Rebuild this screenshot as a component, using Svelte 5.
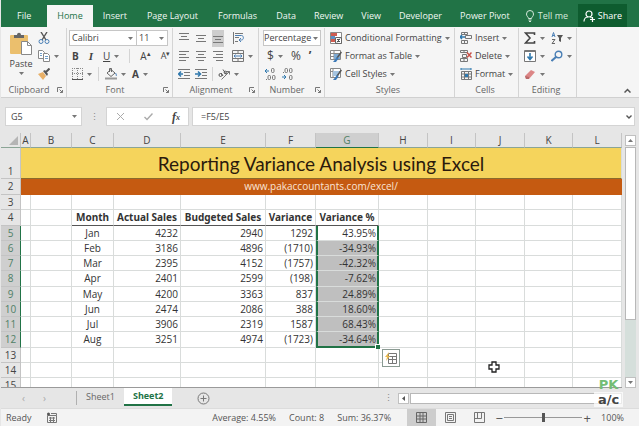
<script>
    const tabs = ["File", "Home", "Insert", "Page Layout", "Formulas", "Data", "Review", "View", "Developer", "Power Pivot"];

    // Column letters with their widths
    const columns = [
        ["A", 10], ["B", 41], ["C", 42], ["D", 67], ["E", 85], ["F", 50], ["G", 63],
        ["H", 49], ["I", 48], ["J", 49], ["K", 48], ["L", 49]
    ];

    const headings = ["Month", "Actual Sales", "Budgeted Sales", "Variance", "Variance %"];

    const sales = [
        ["Jan", "4232", "2940", "1292", "43.95%"],
        ["Feb", "3186", "4896", "(1710)", "-34.93%"],
        ["Mar", "2395", "4152", "(1757)", "-42.32%"],
        ["Apr", "2401", "2599", "(198)", "-7.62%"],
        ["May", "4200", "3363", "837", "24.89%"],
        ["Jun", "2474", "2086", "388", "18.60%"],
        ["Jul", "3906", "2319", "1587", "68.43%"],
        ["Aug", "3251", "4974", "(1723)", "-34.64%"]
    ];

    const empty = [0, 1, 2, 3, 4];

    let activeTab = $state("Home");
    let sheet = $state("Sheet2");
    let formula = $state("=F5/E5");
    let zoom = $state(50);
</script>

{#snippet caret()}
    <svg class="caret" viewBox="0 0 5 3"><path d="M0 0h5L2.500 3z" /></svg>
{/snippet}

{#snippet lines(rows)}
    <svg class="icon" viewBox="0 0 12 12">
        {#each rows as [x, y, w]}
            <path d="M{x} {y}.5h{w}" stroke="#777" />
        {/each}
    </svg>
{/snippet}

{#snippet launcher()}
    <button class="launcher" aria-label="More options">
        <svg viewBox="0 0 6 6" fill="none" stroke="#777"><path d="M.5 5V.5H5M2.500 2.500l3 3M5.500 3v2.500H3" /></svg>
    </button>
{/snippet}

<div class="excel">
    <nav class="tabs">
        {#each tabs as tab}
            <button class:active={activeTab === tab} onclick={() => (activeTab = tab)}>{tab}</button>
        {/each}
        <button class="tell">
            <svg class="icon" viewBox="0 0 12 12" fill="none" stroke="#d5e9dc"><path d="M4.500 8.500C4.500 7 2.500 6.500 2.500 4a3.500 3.500 0 017 0c0 2.500-2 3-2 4.500zM4.500 10h3M5 11.500h2" /></svg>
            Tell me
        </button>
        <button class="share">
            <svg class="icon" viewBox="0 0 12 12" fill="none" stroke="#fff" stroke-width="1.200"><circle cx="6" cy="4" r="3" /><path d="M1 11.500c0-3 2-4.500 4-4.500M7.500 7l1 1M7 9.500h5M9.500 7v5" /></svg>
            Share
        </button>
    </nav>

    <div class="ribbon">
        <section class="group clipboard">
            <div class="tools">
                <button class="paste">
                    <svg width="24" height="24" viewBox="0 0 24 24">
                        <rect x="1" y="3" width="18" height="19" rx="1" fill="#ebbf6d" />
                        <path d="M5 6V3h3c0-3 4-3 4 0h3v3z" fill="#666" />
                        <path d="M12.500 9.500h6l4 4v9h-10z" fill="#fff" stroke="#888" />
                        <path d="M18.500 9.500v4h4" fill="none" stroke="#888" />
                    </svg>
                    <span>Paste</span>
                    {@render caret()}
                </button>
                <div class="stack">
                    <button aria-label="Cut">
                        <svg class="icon" viewBox="0 0 12 12" fill="none"><path d="M3 0l5 8M9 0L4 8" stroke="#555" stroke-width="1.400" /><circle cx="3" cy="9.500" r="2" stroke="#4a7fb5" /><circle cx="9" cy="9.500" r="2" stroke="#4a7fb5" /></svg>
                    </button>
                    <button aria-label="Copy">
                        <svg class="icon" viewBox="0 0 12 12" fill="#fff" stroke="#888"><path d="M.5.5h4l2 2v6h-6z" /><path d="M5.500 3.500h4l2 2v6h-6z" /><path d="M2 3.500h2M2 5.500h2M7 6.500h3M7 8.500h3" stroke="#6f9dc8" /></svg>
                        {@render caret()}
                    </button>
                    <button aria-label="Format Painter">
                        <svg class="icon" viewBox="0 0 12 12"><path d="M0 6l5-2 3 4-3 4z" fill="#e8b068" /><path d="M5 3l4 5 1-2-3-4z" fill="#555" /><path d="M8 4l3.500-3.500" stroke="#555" stroke-width="2" /></svg>
                    </button>
                </div>
            </div>
            <footer><h2>Clipboard</h2>{@render launcher()}</footer>
        </section>

        <section class="group font">
            <div class="tools stack">
                <div class="line fields">
                    <select aria-label="Font"><option>Calibri</option></select>
                    <select class="size" aria-label="Font size"><option>11</option></select>
                </div>
                <div class="line letters">
                    <button aria-label="Bold"><b>B</b></button>
                    <button aria-label="Italic"><i>I</i></button>
                    <button aria-label="Underline"><u>U</u>{@render caret()}</button>
                    <span class="rule"></span>
                    <button aria-label="Increase font size">A<sup>▴</sup></button>
                    <button class="small" aria-label="Decrease font size">A<sup>▾</sup></button>
                </div>
                <div class="line letters colours">
                    <button aria-label="Borders">
                        <svg class="icon" viewBox="0 0 12 12" fill="none" stroke="#888"><path d="M1.500 0v11M6.500 0v11M11.500 0v11M1 .5h11M1 5.500h11" stroke-dasharray="1 1" /><path d="M1 11.500h11" stroke="#555" /></svg>
                        {@render caret()}
                    </button>
                    <span class="rule"></span>
                    <button aria-label="Fill colour">
                        <svg class="icon" viewBox="0 0 12 12" fill="none" stroke="#666"><path d="M2 5l4-3.500L10 5 6 8.500zM4.500 4V.5h2V4" /><path d="M10.500 5c1 1.500 1 3 .5 3" stroke="#4a7fb5" /><path d="M0 10.500h12" stroke="#999" stroke-width="2" /></svg>
                        {@render caret()}
                    </button>
                    <button aria-label="Font colour"><b>A</b>{@render caret()}</button>
                </div>
            </div>
            <footer><h2>Font</h2>{@render launcher()}</footer>
        </section>

        <section class="group alignment">
            <div class="tools stack">
                <div class="line">
                    <button aria-label="Top align">{@render lines([[1, 1, 10], [3, 4, 6], [1, 7, 10]])}</button>
                    <button aria-label="Middle align">{@render lines([[1, 3, 10], [3, 6, 6], [1, 9, 10]])}</button>
                    <button class="pressed" aria-label="Bottom align">{@render lines([[1, 4, 10], [3, 7, 6], [1, 10, 10]])}</button>
                    <button class="wide" aria-label="Wrap text">
                        <svg class="icon" viewBox="0 0 12 12" fill="none" stroke="#777"><path d="M1.500 0v12M3 1.500h8M3 5.500h4M3 9.500h3" /><path d="M3 3.500h6.500c2.500 0 2.500 4.500 0 4.500H7M9 6L7 8l2 2" stroke="#4a7fb5" /></svg>
                    </button>
                </div>
                <div class="line">
                    <button aria-label="Align left">{@render lines([[1, 1, 10], [1, 4, 7], [1, 7, 10], [1, 10, 7]])}</button>
                    <button aria-label="Centre">{@render lines([[1, 1, 10], [3, 4, 6], [1, 7, 10], [3, 10, 6]])}</button>
                    <button aria-label="Align right">{@render lines([[1, 1, 10], [4, 4, 7], [1, 7, 10], [4, 10, 7]])}</button>
                    <button class="wide" aria-label="Merge and centre">
                        <svg class="icon" viewBox="0 0 12 12" fill="none" stroke="#777"><path d="M.5.5h11v11H.5zM.5 3.500h11M.5 8.500h11M6 0v3M6 9v3" /><path d="M2 6h8M3.500 4.500L2 6l1.500 1.500M8.500 4.500L10 6 8.500 7.500" stroke="#4a7fb5" /></svg>
                        {@render caret()}
                    </button>
                </div>
                <div class="line">
                    <button aria-label="Decrease indent">
                        <svg class="icon" viewBox="0 0 12 12" fill="none" stroke="#777"><path d="M0 1.500h12M6 4.500h6M6 7.500h6M0 10.500h12" /><path d="M5 6H1M3 3.500L.5 6 3 8.500" stroke="#2f78ad" stroke-width="1.500" /></svg>
                    </button>
                    <button aria-label="Increase indent">
                        <svg class="icon" viewBox="0 0 12 12" fill="none" stroke="#777"><path d="M0 1.500h12M7 4.500h5M7 7.500h5M0 10.500h12" /><path d="M0 6h5M3 3.500L5.500 6 3 8.500" stroke="#2f78ad" stroke-width="1.500" /></svg>
                    </button>
                    <span class="rule"></span>
                    <button aria-label="Orientation">
                        <svg class="icon" viewBox="0 0 12 12" fill="none" stroke="#555"><path d="M3.500 11.500l8-8M8.500 3.500h3v3" stroke="#777" /><circle cx="2.500" cy="7" r="1.500" /><path d="M3 5l2 3M5 1.500l3 4.500" /><circle cx="7.500" cy="4.500" r="1.300" /></svg>
                        {@render caret()}
                    </button>
                </div>
            </div>
            <footer><h2>Alignment</h2>{@render launcher()}</footer>
        </section>

        <section class="group number">
            <div class="tools stack">
                <div class="line fields">
                    <select aria-label="Number format"><option>Percentage</option></select>
                </div>
                <div class="line symbols">
                    <button aria-label="Accounting format">${@render caret()}</button>
                    <button aria-label="Percent style">%</button>
                    <button aria-label="Comma style"><b>’</b></button>
                </div>
                <div class="line decimals">
                    <button aria-label="Increase decimal">
                        <svg class="icon" viewBox="0 0 12 12" fill="none" stroke="#777"><path d="M1 3h4M3 1L1 3l2 2" stroke="#2f78ad" /><rect x="7.500" y=".5" width="2.500" height="4" rx="1" /><rect x="4" y="7.500" width="2.500" height="4" rx="1" /><rect x="8.500" y="7.500" width="2.500" height="4" rx="1" /><path d="M2 11.500h1" /></svg>
                    </button>
                    <button aria-label="Decrease decimal">
                        <svg class="icon" viewBox="0 0 12 12" fill="none" stroke="#777"><path d="M1 9h4M3 7l2 2-2 2" stroke="#2f78ad" /><rect x="4" y=".5" width="2.500" height="4" rx="1" /><rect x="8.500" y=".5" width="2.500" height="4" rx="1" /><rect x="8.500" y="7.500" width="2.500" height="4" rx="1" /><path d="M2 4.500h1" /></svg>
                    </button>
                </div>
            </div>
            <footer><h2>Number</h2>{@render launcher()}</footer>
        </section>

        <section class="group styles">
            <div class="tools stack">
                <button>
                    <svg class="icon" viewBox="0 0 12 12"><path d="M.5.5h11v11H.5z" fill="#fff" stroke="#888" /><path d="M1 1h6v3H1zM1 7h4v3H1z" fill="#cf5b50" /><path d="M1 4h4v3H1z" fill="#5b8fc4" /><path d="M5.500 5.500h6v6h-6z" fill="#fff" stroke="#666" /><path d="M7 7.500h3M7 9.500h3M10 6.500l-3 4" stroke="#555" /></svg>
                    Conditional Formatting {@render caret()}
                </button>
                <button>
                    <svg class="icon" viewBox="0 0 12 12"><path d="M.5.5h10v9H.5zM.5 3.500h10M.5 6.500h10M4 0v9" fill="#fff" stroke="#888" /><path d="M4 4h6v5H4z" fill="#7eaad3" /><path d="M11.500 2L7 8" stroke="#555" stroke-width="1.500" /><path d="M7 7l1.500 1.500L6 12H3z" fill="#3d7ab8" /></svg>
                    Format as Table {@render caret()}
                </button>
                <button>
                    <svg class="icon" viewBox="0 0 12 12"><path d="M.5.5h10v9H.5zM.5 3.500h10M3 0v9" fill="#fff" stroke="#888" /><path d="M3 3h6v5H3z" fill="#a5c4e0" /><path d="M11.500 2L7 8" stroke="#555" stroke-width="1.500" /><path d="M7 7l1.500 1.500L6 12H3z" fill="#3d7ab8" /></svg>
                    Cell Styles {@render caret()}
                </button>
            </div>
            <footer><h2>Styles</h2></footer>
        </section>

        <section class="group cells">
            <div class="tools stack">
                <button>
                    <svg class="icon" viewBox="0 0 12 12" fill="none" stroke="#777"><path d="M1.500.5h6v2h-6zM4.500.5v2M1.500 8.500h6v3h-6zM4.500 8.500v3M5.500 3.500h6v3h-6z" /><path d="M0 5h5M2 3L0 5l2 2" stroke="#2f78ad" stroke-width="1.400" /></svg>
                    Insert {@render caret()}
                </button>
                <button>
                    <svg class="icon" viewBox="0 0 12 12" fill="none" stroke="#777"><path d="M.5.5h7v2h-7zM4 .5v2M.5 8.500h7v3h-7zM4 8.500v3M2.500 4.500h4v3h-4z" /><path d="M7 2.500l4.500 5M11.500 2.500L7 7.500" stroke="#c94f46" stroke-width="1.500" /></svg>
                    Delete {@render caret()}
                </button>
                <button>
                    <svg class="icon" viewBox="0 0 12 12" fill="none" stroke="#777"><path d="M1.500 3.500h10v8h-10zM1.500 6h10M1.500 9h10M4.500 3v8M8.500 3v8" /><path d="M1 1h10M1 0v2M11 0v2" stroke="#2f78ad" /><path d="M5 6h3v3H5z" fill="#2f78ad" stroke="none" /></svg>
                    Format {@render caret()}
                </button>
            </div>
            <footer><h2>Cells</h2></footer>
        </section>

        <section class="group editing">
            <div class="tools stack">
                <div class="line">
                    <button aria-label="AutoSum">
                        <svg class="icon" viewBox="0 0 12 12" fill="none" stroke="#444" stroke-width="1.600"><path d="M10.500 3V1H1.500L6 6l-4.500 5h9V9" /></svg>
                        {@render caret()}
                    </button>
                    <button aria-label="Sort and filter">
                        <svg class="icon" viewBox="0 0 12 12" fill="none"><path d="M1 5l1.500-4.500L4 5M1.500 3.500h2" stroke="#4a7fb5" /><path d="M1 7.500h3L1 11.500h3" stroke="#666" /><path d="M6 3h6L10 6v4L8 9V6z" fill="#555" /></svg>
                        {@render caret()}
                    </button>
                </div>
                <div class="line">
                    <button aria-label="Fill">
                        <svg class="icon" viewBox="0 0 12 12" fill="#fff" stroke="#777"><path d="M.5.5h11v11H.5z" /><path d="M1 1.500h10" /><path d="M6 3v6M3.500 6.500L6 9.500l2.500-3" fill="none" stroke="#2f78ad" stroke-width="1.600" /></svg>
                        {@render caret()}
                    </button>
                    <button aria-label="Find and select">
                        <svg class="icon" viewBox="0 0 12 12" fill="none" stroke="#4a7fb5" stroke-width="1.400"><circle cx="7.500" cy="4.500" r="3.300" /><path d="M5 7l-4.500 4" stroke-width="2" /></svg>
                        {@render caret()}
                    </button>
                </div>
                <div class="line">
                    <button aria-label="Clear">
                        <svg class="icon" viewBox="0 0 12 12"><path d="M1 8l6-6 4 2-6 7H2z" fill="#dc8686" /><path d="M1 8l4 1v2H2z" fill="#b96a6a" /></svg>
                        {@render caret()}
                    </button>
                </div>
            </div>
            <footer><h2>Editing</h2></footer>
        </section>

        <button class="collapse" aria-label="Collapse the ribbon">
            <svg width="7" height="5" viewBox="0 0 7 5" fill="none" stroke="#555" stroke-width="1.500"><path d="M.5 4.500l3-3 3 3" /></svg>
        </button>
    </div>

    <div class="formula-bar">
        <select class="name-box" aria-label="Name box"><option>G5</option></select>
        <span class="dots">⋮</span>
        <div class="checks">
            <button aria-label="Cancel"><svg width="9" height="9" viewBox="0 0 9 9" stroke="#aaa"><path d="M1 1l7 7M8 1L1 8" /></svg></button>
            <button aria-label="Enter"><svg width="9" height="9" viewBox="0 0 9 9" fill="none" stroke="#aaa" stroke-width="1.400"><path d="M.5 5L3 7.500 8.500 1.500" /></svg></button>
            <button class="fx" aria-label="Insert function">f<small>x</small></button>
        </div>
        <div class="entry">
            <input aria-label="Formula" bind:value={formula} />
            <button aria-label="Expand formula bar"><svg width="6" height="4" viewBox="0 0 6 4" fill="none" stroke="#555" stroke-width="1.400"><path d="M.5.5L3 3 5.500.5" /></svg></button>
        </div>
    </div>

    <div class="workbook">
        <div class="sheet">
            <table>
                <colgroup>
                    <col style="width: 20px" />
                    {#each columns as [letter, width]}
                        <col style="width: {width}px" />
                    {/each}
                </colgroup>
                <thead>
                    <tr>
                        <th class="corner"><svg width="9" height="9" viewBox="0 0 9 9"><path d="M9 0v9H0z" fill="#b5b5b5" /></svg></th>
                        {#each columns as [letter]}
                            <th class:selected={letter === "G"}>{letter}</th>
                        {/each}
                    </tr>
                </thead>
                <tbody>
                    <tr class="title"><th>1</th><td colspan="12">Reporting Variance Analysis using Excel</td></tr>
                    <tr class="site"><th>2</th><td colspan="12">www.pakaccountants.com/excel/</td></tr>
                    <tr><th>3</th>{#each columns as column}<td></td>{/each}</tr>
                    <tr class="headings">
                        <th>4</th><td></td><td></td>
                        {#each headings as heading}<td>{heading}</td>{/each}
                        {#each empty as cell}<td></td>{/each}
                    </tr>
                    {#each sales as row, i}
                        <tr class="data" class:last={i === sales.length - 1}>
                            <th class="selected">{i + 5}</th><td></td><td></td>
                            {#each row as value, j}
                                <td class:month={j === 0} class:range={j === 4} class:current={i === 0 && j === 4}>{value}</td>
                            {/each}
                            {#each empty as cell}<td></td>{/each}
                        </tr>
                    {/each}
                    {#each [13, 14, 15] as number}
                        <tr><th>{number}</th>{#each columns as column}<td></td>{/each}</tr>
                    {/each}
                </tbody>
            </table>
            <button class="quick" aria-label="Quick analysis">
                <svg width="12" height="12" viewBox="0 0 12 12" fill="#fff" stroke="#777"><path d="M3.500 1.500h8v10h-8zM3.500 4.500h8M3.500 7.500h8M7.500 4v7" /><path d="M4 0L0 5h2L1 9l4-5H3z" fill="#eab94d" stroke="none" /></svg>
            </button>
            <svg class="pointer" width="12" height="12" viewBox="0 0 12 12"><path d="M4 1h4v3h3v4H8v3H4V8H1V4h3z" fill="#fff" stroke="#222" stroke-width="1.300" /></svg>
        </div>
        <div class="scroll-y">
            <button aria-label="Scroll up"><svg class="caret" viewBox="0 0 5 3"><path d="M0 3h5L2.500 0z" /></svg></button>
            <span class="thumb"></span>
            <span class="track"></span>
            <button aria-label="Scroll down">{@render caret()}</button>
        </div>
    </div>

    <div class="sheet-bar">
        <button class="arrow" aria-label="Previous sheet">‹</button>
        <button class="arrow" aria-label="Next sheet">›</button>
        <span class="rule"></span>
        {#each ["Sheet1", "Sheet2"] as name}
            <button class="sheet-tab" class:active={sheet === name} onclick={() => (sheet = name)}>{name}</button>
        {/each}
        <button class="add" aria-label="New sheet">
            <svg width="13" height="13" viewBox="0 0 13 13" fill="none" stroke="#777"><circle cx="6.500" cy="6.500" r="5.500" /><path d="M3.500 6.500h6M6.500 3.500v6" /></svg>
        </button>
        <div class="scroll-x">
            <span class="dots">⋮</span>
            <button aria-label="Scroll left"><svg width="3" height="5" viewBox="0 0 3 5"><path d="M3 0v5L0 2.500z" fill="#555" /></svg></button>
            <span class="thumb"></span>
        </div>
        <div class="logo"><span>PK</span><span>a/c</span></div>
    </div>

    <div class="status">
        <span>Ready</span>
        <button class="macro" aria-label="Record macro">
            <svg width="11" height="11" viewBox="0 0 11 11" fill="none" stroke="#777"><path d="M1.500 3.500h9v7h-9zM5 1.500h5.500v2M3 6h6M3 8.500h6M4.500 5v5M7.500 5v5" /><circle cx="2.500" cy="2" r="1.500" fill="#555" stroke="none" /></svg>
        </button>
        <div class="sums">
            <span>Average: 4.55%</span>
            <span>Count: 8</span>
            <span>Sum: 36.37%</span>
        </div>
        <div class="views">
            <button class="pressed" aria-label="Normal view"><svg width="11" height="11" viewBox="0 0 11 11" fill="none" stroke="#666"><path d="M.5.5h10v10H.5zM.5 4h10M.5 7h10M4 .5v10M7 .5v10" /></svg></button>
            <button aria-label="Page layout view"><svg width="11" height="11" viewBox="0 0 11 11" fill="none" stroke="#777"><path d="M.5.5h10v10H.5zM2.500 2.500h6v6h-6zM4 4.500h3M4 6.500h3" /></svg></button>
            <button aria-label="Page break view"><svg width="11" height="11" viewBox="0 0 11 11" fill="none" stroke="#777"><path d="M.5.5h10v10H.5zM3.500 1v5.500h4V1M1 6.500h3" /></svg></button>
        </div>
        <button class="step" aria-label="Zoom out">−</button>
        <input type="range" aria-label="Zoom" min="0" max="100" bind:value={zoom} />
        <button class="step" aria-label="Zoom in">+</button>
        <button class="percent">100%</button>
    </div>
</div>

<style>
    :global(body) {
        background-color: #e6e6e6;
    }

    .excel {
        font-family: "Open Sans", "Noto Sans", sans-serif;
        font-size: 9px;
        line-height: 12px;
        color: #444;
        padding-left: 1px;
    }

    button, input, select {
        font: inherit;
        color: inherit;
        background: none;
        border: 0;
        border-radius: 0;
        padding: 0;
        margin: 0;
        min-width: 0;
        box-sizing: border-box;
    }

    button {
        display: flex;
        align-items: center;
        white-space: nowrap;
    }

    select {
        appearance: none;
        background: #fff url("data:image/svg+xml,%3Csvg xmlns='http://www.w3.org/2000/svg' width='5' height='3'%3E%3Cpath d='M0 0h5L2.5 3z' fill='%23777'/%3E%3C/svg%3E") no-repeat right 3px center;
    }

    svg {
        display: block;
        flex: none;
    }

    .icon {
        width: 12px;
        height: 12px;
    }

    .caret {
        width: 5px;
        height: 3px;
        fill: #777;
    }

    .rule {
        width: 1px;
        height: 14px;
        background-color: #d4d4d4;
    }


    /* Ribbon tabs */
    .tabs {
        display: flex;
        align-items: flex-end;
        height: 27px;
        padding-right: 12px;
        background-color: #217346;
    }

    .tabs button {
        height: 22px;
        padding: 0 10px;
        color: #f0f7f3;
    }

    .tabs button:first-child {
        padding: 0 16px;
    }

    .tabs button:nth-child(n+6) {
        padding: 0 9px;
    }

    .tabs .active {
        background-color: #f5f5f5;
        color: #217346;
    }

    .tabs .tell {
        gap: 2px;
        color: #d5e9dc;
    }

    .tabs .share {
        gap: 3px;
        height: 23px;
        margin-left: auto;
        background-color: #0e5c2f;
        color: #fff;
    }

    .tabs button.tell, .tabs button.share {
        padding: 0 5px;
    }


    /* Ribbon */
    .ribbon {
        display: flex;
        background-color: #f5f5f5;
        border-bottom: 1px solid #d0d0d0;
        padding-top: 1px;
    }

    .group {
        display: flex;
        flex-direction: column;
        box-sizing: border-box;
        border-right: 1px solid #d4d4d4;
    }

    .tools {
        flex: 1;
    }

    .stack, .tools.stack {
        display: grid;
        grid-template-rows: 18px 18px 18px;
        align-items: center;
        align-content: start;
        padding-top: 1px;
    }

    .line {
        display: flex;
        align-items: center;
    }

    .line button {
        gap: 4px;
    }

    footer {
        display: flex;
        align-items: center;
        justify-content: center;
        height: 12px;
        padding: 1px 3px 1px 0;
        color: #666;
    }

    footer h2 {
        flex: 1;
        margin: 0;
        font-size: 9px;
        font-weight: 400;
        text-align: center;
    }

    .launcher svg {
        width: 6px;
        height: 6px;
    }

    .clipboard {width: 66px;}
    .font {width: 106px;}
    .alignment {width: 86px;}
    .number {width: 66px;}
    .styles {width: 130px;}
    .cells {width: 64px;}
    .editing {width: 58px;}

    .clipboard .tools {
        display: flex;
        gap: 5px;
        padding-left: 8px;
    }

    .clipboard .stack button {
        gap: 4px;
    }

    .paste {
        flex-direction: column;
        gap: 2px;
        padding-top: 4px;
        height: 50px;
    }

    .fields select {
        flex: 1;
        height: 16px;
        padding-left: 2px;
        border: 1px solid #c6c6c6;
    }

    .fields .size {
        flex: none;
        width: 32px;
        margin-left: -1px;
    }

    .font .fields {
        padding: 0 4px 0 2px;
    }

    .number .fields {
        padding: 0 3px 0 4px;
    }

    .number .fields select {
        padding-left: 0;
        background-position: right 2px center;
    }

    .letters {
        gap: 10px;
        padding-left: 5px;
    }

    .letters button {
        font-size: 10px;
    }

    .letters .small {
        font-size: 9px;
    }

    .colours {
        gap: 6px;
        padding-left: 4px;
    }

    sup {
        font-size: 7px;
        line-height: 8px;
        margin: 0 0 4px -4px;
    }

    .letters i {
        font-family: "Liberation Serif", serif;
        font-size: 11px;
        font-weight: 700;
    }

    .alignment .line {
        gap: 5px;
        padding-left: 5px;
    }

    .alignment .wide {
        margin-left: 3px;
    }

    .pressed {
        background-color: #cdcdcd;
    }

    .alignment .pressed {
        height: 17px;
    }

    .symbols {
        gap: 8px;
        padding-left: 8px;
        font-size: 12px;
    }

    .decimals {
        gap: 5px;
        padding-left: 5px;
    }

    .styles button, .cells button {
        gap: 3px;
        padding-left: 5px;
    }

    .editing .line {
        gap: 6px;
        padding-left: 5px;
    }

    .collapse {
        margin-left: auto;
        padding: 0 8px 4px 0;
        align-items: flex-end;
    }


    /* Formula bar */
    .formula-bar {
        display: flex;
        align-items: center;
        gap: 3px;
        padding: 9px 4px 7px;
    }

    .name-box, .checks, .entry {
        height: 19px;
        box-sizing: border-box;
        border: 1px solid #d4d4d4;
    }

    .name-box {
        width: 77px;
        padding-left: 5px;
        background-position: right 4px center;
    }

    .dots {
        width: 18px;
        text-align: center;
        color: #888;
    }

    .checks, .entry {
        background-color: #fff;
    }

    .checks {
        display: flex;
        justify-content: space-between;
        width: 83px;
        padding: 0 8px 0 9px;
    }

    .fx {
        font-family: "Liberation Serif", serif;
        font-size: 12px;
        font-style: italic;
        font-weight: 700;
    }

    .fx small {
        font-size: 8px;
        padding-top: 3px;
    }

    .entry {
        display: flex;
        flex: 1;
        padding: 0 2px 0 8px;
    }

    .entry input {
        flex: 1;
        outline: 0;
    }


    /* Worksheet */
    .workbook {
        display: flex;
        padding-right: 3px;
        gap: 3px;
    }

    .sheet {
        position: relative;
        flex: 1;
        height: 254px;
        overflow: hidden;
        border-bottom: 1px solid #9a9a9a;
    }

    table {
        width: 100%;
        table-layout: fixed;
        border-collapse: separate;
        border-spacing: 0;
        background-color: #fff;
        font-size: 10px;
        line-height: 13px;
        color: #333;
    }

    th, td {
        box-sizing: border-box;
        height: 15px;
        padding: 0;
        border-right: 1px solid #d9dcdb;
        border-bottom: 1px solid #d9dcdb;
        white-space: nowrap;
    }

    tbody tr:nth-child(4n) > * {
        height: 16px;
    }

    th {
        background-color: #e6e6e6;
        border-color: #c4c4c4;
        font-weight: 400;
        color: #444;
    }

    thead th {
        border-bottom-color: #8ba596;
    }

    .corner svg {
        margin-left: 8px;
    }

    th.selected {
        background-color: #cfcfcf;
        color: #4f7f66;
    }

    thead th.selected {
        border-bottom-color: #217346;
    }

    tbody th.selected {
        border-right-color: #217346;
    }

    .title > * {
        height: 31px;
        vertical-align: bottom;
    }

    .title td {
        background-color: #f5d45c;
        border-bottom-color: #8b6a2c;
        color: #2b1a0c;
        font-family: Lato, "Open Sans", sans-serif;
        font-size: 19px;
        line-height: 28px;
        text-align: center;
    }

    .site > * {
        height: 16px;
    }

    .site td {
        background-color: #c55a11;
        border-color: #c55a11;
        color: #fbe5d6;
        text-align: center;
    }

    .headings td {
        font-family: "Noto Sans", sans-serif;
        font-weight: 700;
        text-align: center;
    }

    .headings td:nth-child(n+4):nth-child(-n+8) {
        border-bottom-color: #555;
    }

    .data td {
        padding-right: 2px;
        text-align: right;
    }

    .data .month {
        padding: 0;
        text-align: center;
    }

    .data .range {
        background-color: #bfbfbf;
        border-right: 2px solid #217346;
        border-left: 2px solid #217346;
        padding-right: 1px;
    }

    .data .current {
        background-color: #fff;
    }

    .last .range {
        position: relative;
        border-bottom: 2px solid #217346;
    }

    /* Fill handle */
    .last .range::after {
        content: "";
        position: absolute;
        right: -3px;
        bottom: -3px;
        width: 4px;
        height: 4px;
        border: 1px solid #fff;
        border-width: 1px 0 0 1px;
        background-color: #217346;
    }

    .quick {
        position: absolute;
        left: 381px;
        top: 216px;
        width: 18px;
        height: 18px;
        justify-content: center;
        border: 1px solid #8a9a92;
        background-color: #fff;
    }

    .pointer {
        position: absolute;
        left: 487px;
        top: 228px;
    }

    .scroll-y {
        display: flex;
        flex-direction: column;
        width: 11px;
        padding-top: 2px;
    }

    .scroll-y button, .scroll-x button {
        justify-content: center;
        width: 11px;
        height: 11px;
        border: 1px solid #c0c0c0;
        background-color: #fff;
    }

    .thumb {
        box-sizing: border-box;
        border: 1px solid #b8b8b8;
        background-color: #fff;
    }

    .scroll-y .thumb {
        flex: 3;
        margin-top: 1px;
    }

    .track {
        flex: 1;
        background-color: #d5dfdb;
    }


    /* Sheet tabs */
    .sheet-bar {
        position: relative;
        display: flex;
        align-items: center;
        height: 20px;
        padding-right: 17px;
    }

    .arrow {
        width: 21px;
        justify-content: center;
        font-size: 10px;
        color: #aaa;
    }

    .arrow:first-child {
        margin-left: 12px;
    }

    .sheet-bar .rule {
        margin-left: 21px;
        background-color: #b0b0b0;
    }

    .sheet-tab {
        height: 18px;
        padding: 0 9px;
        align-self: flex-start;
        color: #666;
    }

    .sheet-tab.active {
        background-color: #fff;
        border-bottom: 2px solid #217346;
        color: #217346;
        font-weight: 700;
    }

    .add {
        margin-left: 25px;
    }

    .scroll-x {
        display: flex;
        align-items: center;
        width: 39%;
        margin-left: auto;
    }

    .scroll-x .thumb {
        flex: 1;
        height: 11px;
        margin-left: 1px;
    }

    .logo {
        position: absolute;
        right: 16px;
        bottom: 1px;
        display: grid;
        width: 29px;
        background: linear-gradient(transparent 50%, rgba(255, 255, 255, 0.7) 50%);
        font: 700 13px/15px "DejaVu Sans", sans-serif;
        text-align: center;
    }

    .logo span:first-child {
        color: #73bd75;
    }


    /* Status bar */
    .status {
        display: flex;
        align-items: center;
        height: 17px;
        padding: 0 15px 0 5px;
        background-color: #f3f3f3;
        border-top: 1px solid #dcdcdc;
        border-bottom: 1px solid #4b7a68;
        color: #555;
    }

    .macro {
        margin-left: 14px;
    }

    .sums {
        display: flex;
        gap: 13px;
        margin-left: auto;
    }

    .views {
        display: flex;
        align-self: stretch;
        margin-left: 16px;
    }

    .views button {
        justify-content: center;
        width: 29px;
    }

    .step {
        justify-content: center;
        width: 10px;
        font-size: 13px;
    }

    .status input {
        appearance: none;
        width: 78px;
        height: 11px;
        background: linear-gradient(#999, #999) no-repeat center / 100% 1px;
    }

    .status input::-webkit-slider-thumb {
        appearance: none;
        width: 3px;
        height: 9px;
        background-color: #555;
    }

    .percent {
        margin-left: 9px;
    }
</style>
